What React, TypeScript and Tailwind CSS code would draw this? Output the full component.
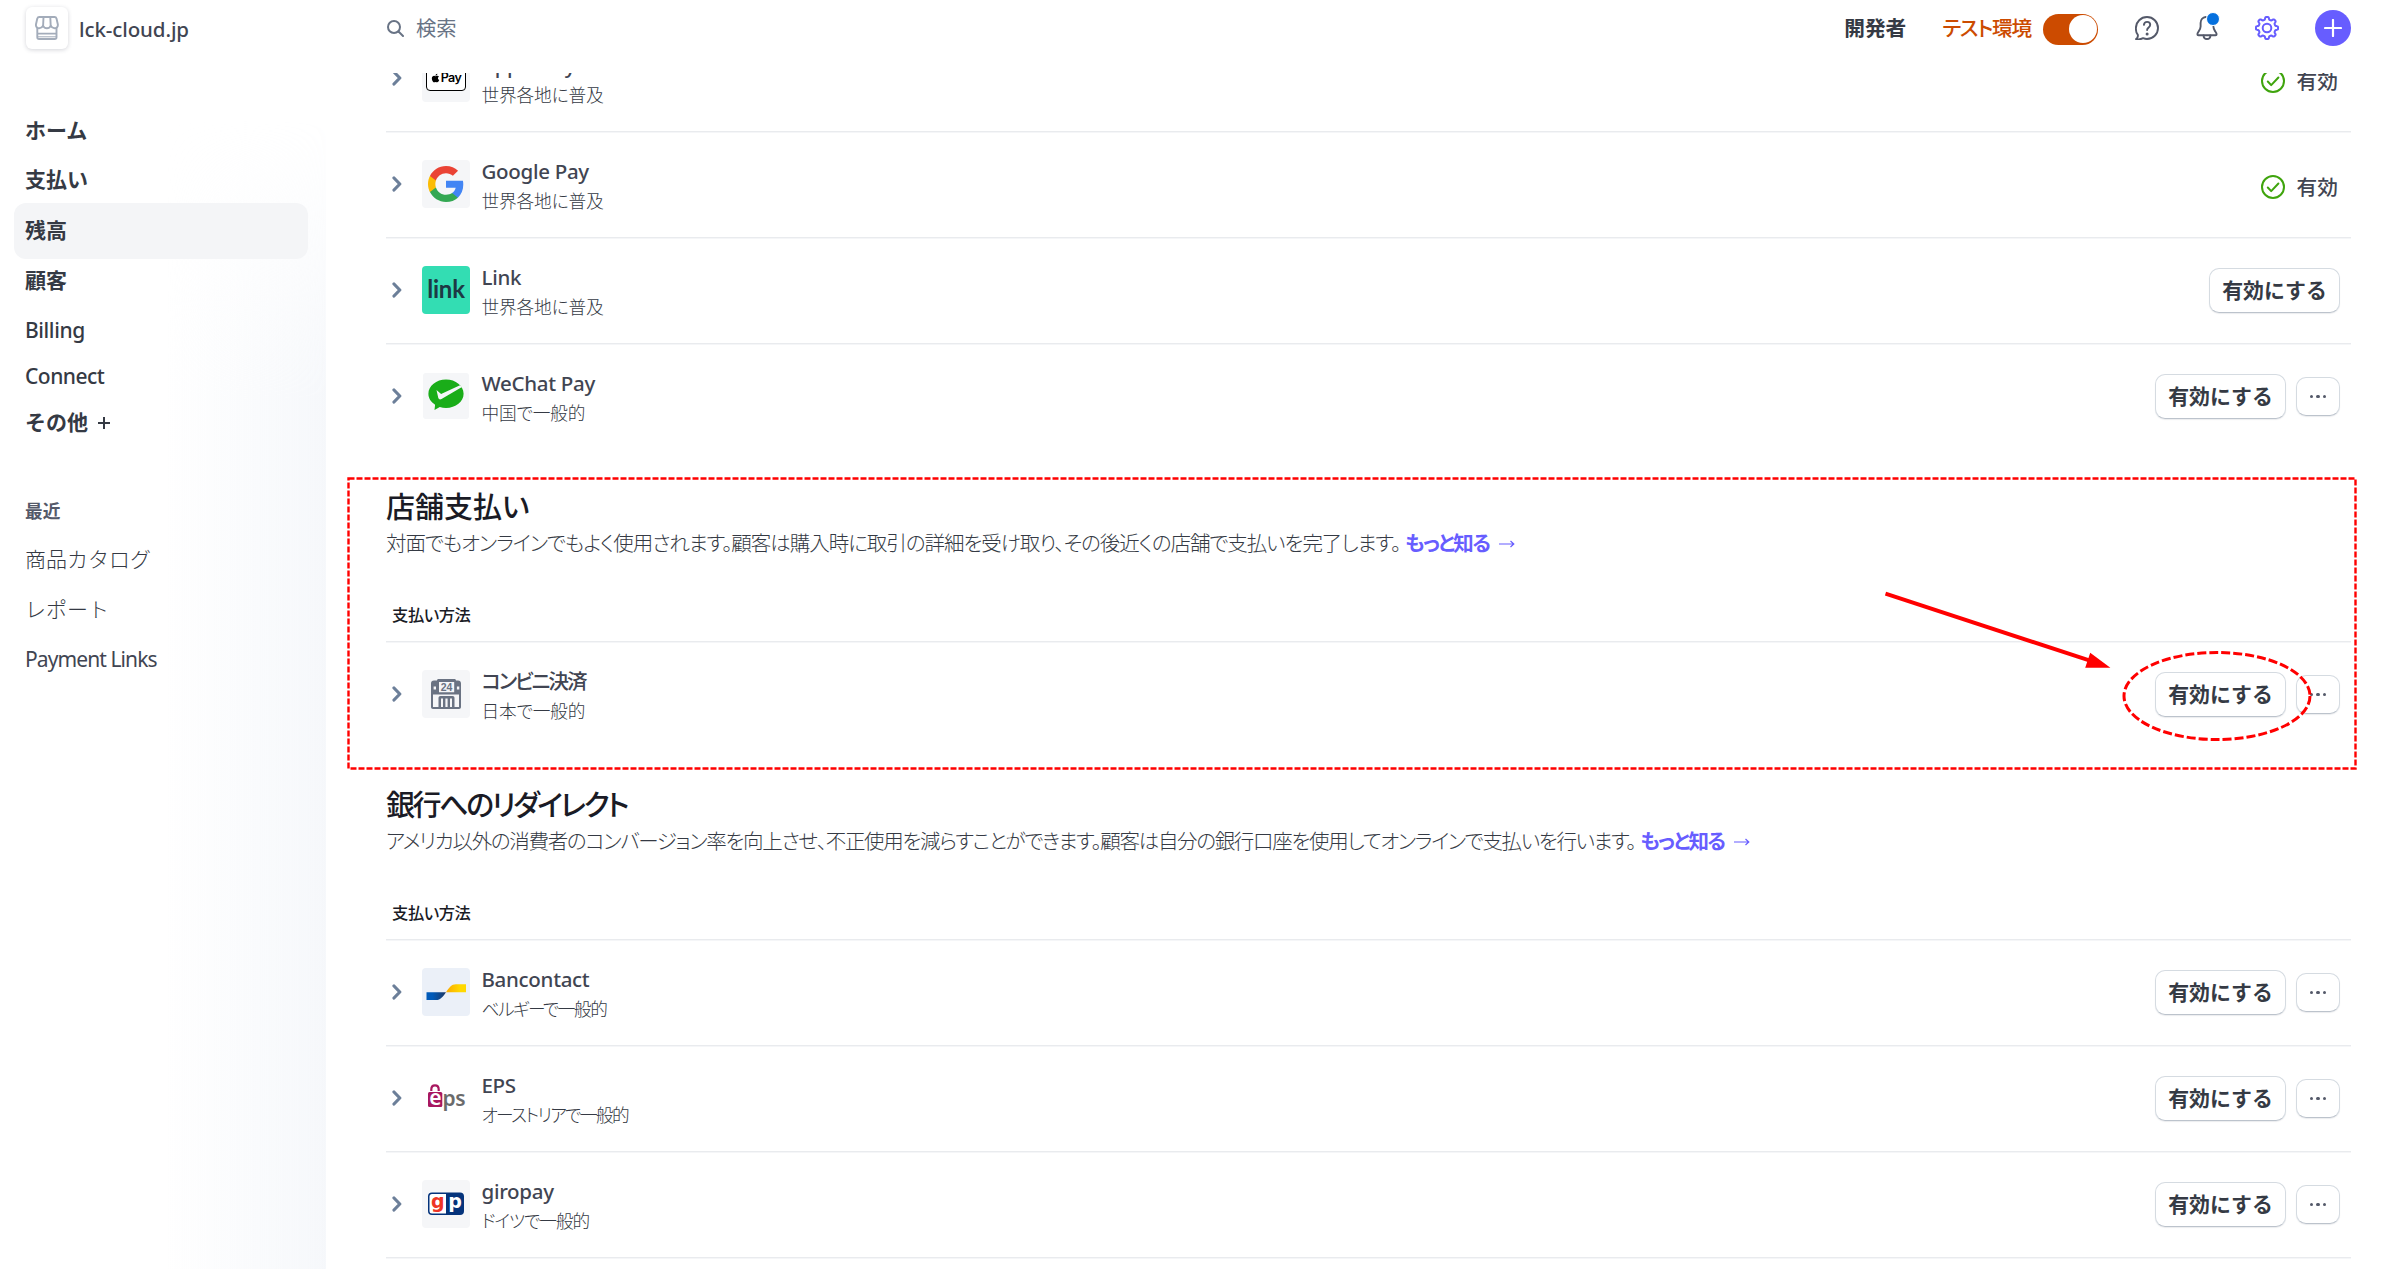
import React from 'react';
import { FaApple } from 'react-icons/fa';

const Chevron = () => (
  <svg className="h-[16px] w-[10px] shrink-0" viewBox="0 0 10 16" fill="none" stroke="#6c7f99" strokeWidth="3.2" strokeLinecap="round" strokeLinejoin="round">
    <path d="M2 2l5.800 6L2 14" />
  </svg>
);

const StoreIcon = () => (
  <svg className="h-6 w-6" viewBox="0 0 24 24" fill="none" stroke="#a3acba" strokeWidth="1.900" strokeLinecap="round" strokeLinejoin="round">
    <path d="M4.200 1h15.400c1 0 1.600.5 1.900 1.500l1.300 5.700c.4 2.200-1 4.100-3.200 4.100-1.700 0-3-.9-3.900-2.500-.8 1.600-2.100 2.500-3.800 2.500s-3-.9-3.800-2.500c-.9 1.600-2.200 2.500-3.900 2.500-2.200 0-3.600-1.900-3.200-4.100l1.300-5.700C2.600 1.500 3.200 1 4.200 1z" />
    <path d="M8.500 1.200l-.4 8.600M15.300 1.200l.4 8.600M2.300 12.200v9c0 1.200.6 1.800 1.800 1.800h15.600c1.200 0 1.800-.6 1.800-1.800v-9M2.500 17.600h18.800" />
    <path d="M3 20.800h17.800" strokeWidth="1" />
  </svg>
);

const SearchIcon = () => (
  <svg className="h-[17px] w-[17px]" viewBox="0 0 17 17" fill="none" stroke="#687385" strokeWidth="2" strokeLinecap="round">
    <circle cx="7" cy="7" r="6" />
    <path d="M11.500 11.500L16 16" />
  </svg>
);

const HelpIcon = () => (
  <svg className="h-6 w-6" viewBox="0 0 24 24" fill="none" stroke="#545969" strokeWidth="1.900" strokeLinecap="round" strokeLinejoin="round">
    <path d="M1 23.100c1.500-.9 2.200-2.300 1.800-4.300C.7 16.800.9 14.200.9 12 .9 5.900 5.900 1 12 1s11 4.900 11 11-4.900 11-11 11c-1.500 0-2.600-.3-3.900-.8-2.100 1.100-4.600 1.500-7.100.9z" />
    <path d="M8.900 8.900c.2-1.800 1.500-3 3.200-3s3.100 1.200 3.100 2.900c0 2.600-3.100 2.600-3.100 5.200" />
    <circle cx="12.100" cy="17.900" r="1.500" fill="#545969" stroke="none" />
  </svg>
);

const BellIcon = () => (
  <svg className="h-6 w-6" viewBox="0 0 24 24" fill="none" stroke="#545969" strokeWidth="1.900" strokeLinecap="round" strokeLinejoin="round">
    <path d="M10.800 1C7.700 1.300 5.600 3.900 5.600 7v3.600c0 2-.9 3.400-1.900 4.800-.8 1.200-1.300 1.900-1.300 2.800 0 .7.400 1 1 1h17.200c.6 0 1-.4 1-1 0-.9-.6-1.600-1.300-2.700-.9-1.400-1.900-2.700-1.900-4.900" />
    <path d="M8.600 19.500c0 2.200 1.300 3.500 3.400 3.500s3.400-1.300 3.400-3.500" />
  </svg>
);

// outline of a gear with eight soft teeth
const gearPath =
  Array.from({ length: 160 }, (_, i) => {
    const a = (i / 160) * Math.PI * 2;
    const wave = Math.tanh(2.2 * Math.cos(8 * a)) / Math.tanh(2.2);
    const r = 9.8 + 1.3 * wave;
    return `${i ? 'L' : 'M'}${(12 + r * Math.sin(a)).toFixed(2)} ${(12 - r * Math.cos(a)).toFixed(2)}`;
  }).join('') + 'Z';

const GearIcon = () => (
  <svg className="h-6 w-6" viewBox="0 0 24 24" fill="none" stroke="#675dff" strokeWidth="2" strokeLinejoin="round">
    <path d={gearPath} />
    <circle cx="12" cy="12" r="4.300" />
  </svg>
);

const CheckIcon = () => (
  <svg className="h-6 w-6" viewBox="0 0 24 24" fill="none" stroke="#3fa40d" strokeWidth="2" strokeLinecap="round" strokeLinejoin="round">
    <circle cx="12" cy="12" r="11" />
    <path d="M6.800 12.500l3.400 3.600 7.200-7.600" />
  </svg>
);

/* Payment method logos, all on a 48px tile */

const ApplePayLogo = () => (
  <div className="flex h-12 w-12 items-center justify-center rounded bg-[#f5f6f8]">
    <div className="flex h-[26px] w-[40px] items-center justify-center rounded-[4px] border-[1.5px] border-black bg-white font-[Inter] text-black">
      <FaApple className="mr-px h-[10px] w-[9px]" />
      <span className="text-[12.5px] leading-none font-semibold tracking-[-0.6px]">Pay</span>
    </div>
  </div>
);

const GoogleLogo = () => (
  <div className="flex h-12 w-12 items-center justify-center rounded bg-[#f5f6f8]">
    <svg className="h-[36px] w-[36px]" viewBox="1 1 22 22">
      <path fill="#4285F4" d="M22.560 12.250c0-.78-.07-1.530-.2-2.250H12v4.260h5.920c-.26 1.370-1.040 2.530-2.210 3.310v2.770h3.570c2.080-1.920 3.280-4.740 3.280-8.090z" />
      <path fill="#34A853" d="M12 23c2.970 0 5.460-.98 7.280-2.660l-3.570-2.770c-.98.66-2.230 1.060-3.710 1.060-2.860 0-5.290-1.930-6.160-4.530H2.180v2.840C3.990 20.530 7.700 23 12 23z" />
      <path fill="#FBBC05" d="M5.840 14.090c-.22-.66-.35-1.360-.35-2.090s.13-1.430.35-2.090V7.070H2.180C1.430 8.550 1 10.220 1 12s.43 3.450 1.180 4.930l2.850-2.220.81-.62z" />
      <path fill="#EA4335" d="M12 5.380c1.620 0 3.060.56 4.210 1.640l3.150-3.150C17.450 2.090 14.970 1 12 1 7.700 1 3.990 3.470 2.180 7.070l3.660 2.840c.87-2.600 3.300-4.530 6.160-4.530z" />
    </svg>
  </div>
);

const LinkLogo = () => (
  <div className="flex h-12 w-12 items-center justify-center rounded bg-[#33ddb3]">
    <span className="-mt-[2px] font-[Lato] text-[24px] leading-none font-bold tracking-[-0.2px] text-[#1d3944]">link</span>
  </div>
);

const WeChatLogo = () => (
  <div className="h-12 w-12 p-px">
    <svg className="h-[46px] w-[46px] rounded-[3px] bg-[#f5f6f8]" viewBox="1 1 46 46">
      <path fill="#1aad19" d="M24 7.600c9.700 0 17.600 6.300 17.600 14.200S33.700 36 24 36c-2.200 0-4.300-.3-6.200-.9L12.500 38l.6-5.300C9 30.100 6.400 26.200 6.400 21.800 6.400 13.900 14.300 7.600 24 7.600z" />
      <path fill="#f5f6f8" d="M14.500 18l4.600 4.100L38 13.200l2 1.800-20.500 12c-1.500.9-2.600.4-3.200-1z" />
    </svg>
  </div>
);

const KonbiniLogo = () => (
  <div className="h-12 w-12 rounded bg-[#f5f6f8]">
    <svg className="h-12 w-12" viewBox="0 0 48 48">
      <path fill="#6a7383" d="M16.500 9h16c.9 0 1.300.5 1.500 1.500h2c1.900 0 3 1.200 3 3V37c0 1.200-.8 2-2 2H11c-1.200 0-2-.8-2-2V13.500c0-1.800 1.100-3 3-3h3c.1-1 .6-1.500 1.500-1.500z" />
      <path fill="#f5f6f8" d="M17 12h15.200v10.300H17zM11.600 16.500h2.400v3h-2.400zM34.900 16.500h2.400v3h-2.400zM11 24.500h26V37H11z" />
      <path fill="#6a7383" d="M18.500 26h12c1.300 0 2 .7 2 2v10h-16V28c0-1.300.7-2 2-2z" />
      <path fill="#f5f6f8" d="M19 28.500h2V37h-2zM23.400 28.500h2.200V37h-2.200zM28 28.500h2V37h-2z" />
      <text x="24.600" y="20.900" textAnchor="middle" fontSize="10.500" fontWeight="700" fill="#6a7383" className="font-['Liberation_Sans']">24</text>
    </svg>
  </div>
);

const BancontactLogo = () => (
  <div className="h-12 w-12 rounded bg-[#ebf0f8]">
    <svg className="h-12 w-12" viewBox="0 0 48 48">
      <defs>
        <linearGradient id="bc-blue">
          <stop offset="0.3" stopColor="#005ab9" />
          <stop offset="1" stopColor="#1e3764" />
        </linearGradient>
        <linearGradient id="bc-yellow">
          <stop offset="0" stopColor="#fba900" />
          <stop offset="0.7" stopColor="#ffd800" />
        </linearGradient>
      </defs>
      <path fill="url(#bc-blue)" d="M4.500 24.200H24c-3.300 4.600-5.300 7.800-10 7.800H4.500z" />
      <path fill="url(#bc-yellow)" d="M24 24.200c3.300-4.700 5.300-8 10-8h10v8z" />
    </svg>
  </div>
);

const EpsLogo = () => (
  <svg className="h-12 w-12" viewBox="0 0 48 48">
    <path d="M9.300 17v-1.500c0-2.600 1.300-4.200 3.700-4.200s3.700 1.600 3.700 4.200V17" fill="none" stroke="#a8175f" strokeWidth="2.200" />
    <rect x="6" y="18" width="14.300" height="15" rx="1.500" fill="#a8175f" />
    <text x="7.300" y="31" fontSize="21" fontWeight="600" fill="#fff" className="font-['Noto_Sans']">e</text>
    <text x="20.500" y="31.500" fontSize="21" fontWeight="600" letterSpacing="-0.3" fill="#6b6b6b" className="font-['Noto_Sans']">ps</text>
  </svg>
);

const GiropayLogo = () => (
  <div className="h-12 w-12 rounded bg-[#f5f6f8]">
    <svg className="h-12 w-12" viewBox="0 0 48 48">
      <rect x="6" y="12.500" width="36" height="22.500" rx="4" fill="#04337b" />
      <path fill="#fff" d="M10 14h14v19.500H10a2.500 2.500 0 0 1-2.500-2.500V16.500A2.500 2.500 0 0 1 10 14z" />
      <text x="15.800" y="27.800" textAnchor="middle" fontSize="19" fontWeight="700" fill="#ee3525" className="font-['DejaVu_Sans']">g</text>
      <text x="33" y="27.800" textAnchor="middle" fontSize="19" fontWeight="700" fill="#fff" className="font-['DejaVu_Sans']">p</text>
    </svg>
  </div>
);

const EnableButton = () => (
  <button className="h-[45px] w-[131px] rounded-[10px] border border-[#d5dbe1] border-b-[#bcc3cc] bg-white pt-px text-[20.9px] font-bold text-[#353a44] shadow-[0_1px_1px_rgba(60,66,87,0.1)]">
    有効にする
  </button>
);

const MoreButton = () => (
  <button className="flex h-[39px] w-[44px] items-center justify-center gap-[3px] rounded-[10px] border border-[#d5dbe1] border-b-[#bcc3cc] bg-white shadow-[0_1px_1px_rgba(60,66,87,0.1)]">
    <span className="h-[3.5px] w-[3.5px] rounded-full bg-[#545969]" />
    <span className="h-[3.5px] w-[3.5px] rounded-full bg-[#545969]" />
    <span className="h-[3.5px] w-[3.5px] rounded-full bg-[#545969]" />
  </button>
);

interface MethodRowProps {
  logo: React.ReactNode;
  name: string;
  region: string;
  action: 'active' | 'enable' | 'enable-more';
  nameClass?: string;
  regionClass?: string;
  last?: boolean;
}

const MethodRow = ({
  logo,
  name,
  region,
  action,
  nameClass = 'tracking-[-0.3px]',
  regionClass = 'tracking-[-0.15px]',
  last,
}: MethodRowProps) => (
  <div
    className={`flex h-[106px] shrink-0 items-center border-b pr-[11px] pb-px pl-[5.5px] ${
      last ? 'border-transparent' : 'border-[#e9ebee] shadow-[0_1px_0_#f5f6f8]'
    }`}
  >
    <Chevron />
    <div className="ml-[20.5px] shrink-0">{logo}</div>
    <div className="mt-[3px] ml-[11.5px] flex-1 whitespace-nowrap [font-feature-settings:'palt']">
      <div className={`text-[20.5px] leading-[28px] font-medium text-[#414552] ${nameClass}`}>{name}</div>
      <div className={`mt-[2px] text-[17.7px] leading-[28px] font-light text-[#353a44] ${regionClass}`}>{region}</div>
    </div>
    {action === 'active' ? (
      <div className="mt-[5px] mr-[2px] flex items-center gap-3">
        <CheckIcon />
        <span className="text-[20.7px] leading-[28px] font-medium text-[#414552]">有効</span>
      </div>
    ) : (
      <div className="mt-px flex items-center gap-[10px]">
        <EnableButton />
        {action === 'enable-more' && <MoreButton />}
      </div>
    )}
  </div>
);

interface SectionProps {
  title: string;
  description: string;
  titleClass: string;
  descriptionClass: string;
  children: React.ReactNode;
}

const Section = ({ title, description, titleClass, descriptionClass, children }: SectionProps) => (
  <section className="shrink-0 pt-[39px]">
    <h2 className={`text-[29px] leading-[36px] font-medium whitespace-nowrap text-[#1a1b25] [font-feature-settings:'palt'] ${titleClass}`}>{title}</h2>
    <p className="mt-[3px] flex gap-[5px] text-[20.5px] leading-[30px] whitespace-nowrap text-[#353a44] [font-feature-settings:'palt']">
      <span className={`font-light ${descriptionClass}`}>{description}</span>
      <a className="flex gap-[10px] font-bold text-[#675dff]">
        <span className="tracking-[-1.8px]">もっと知る</span>
        <svg className="mt-[10px] h-3 w-4" viewBox="0 0 16 12" fill="none" stroke="currentColor" strokeWidth="1.200">
          <path d="M0 6h14.500M11.500 3L14.800 6l-3.300 3" />
        </svg>
      </a>
    </p>
    <div className="flex h-[84px] items-end border-b border-[#e9ebee] pb-[14px] pl-[6px] shadow-[0_1px_0_#f5f6f8] [font-feature-settings:'palt']">
      <span className="text-[16.3px] leading-[24px] font-medium tracking-[-0.4px] text-[#1a1b25]">支払い方法</span>
    </div>
    {children}
  </section>
);

const Sidebar = () => (
  <aside className="relative w-[326px] shrink-0 text-[21px]">
    {/* soft tint along the right edge */}
    <div className="absolute inset-0 bg-linear-to-r from-transparent from-50% to-[#f6f8fb] mask-[linear-gradient(to_bottom,transparent_120px,black_400px)]" />
    <div className="relative">
      <div className="flex h-[56px] items-center gap-[11px] pl-[26px]">
        <div className="flex h-[42px] w-[42px] items-center justify-center rounded-md bg-white shadow-[0_1px_4px_rgba(60,66,87,0.22)]">
          <StoreIcon />
        </div>
        <span className="mt-[2px] text-[20.5px] font-medium tracking-[-0.1px] text-[#414552]">lck-cloud.jp</span>
      </div>
      <nav className="mt-[50px] flex flex-col pr-[18px] pl-[14px] font-bold text-[#353a44]">
        <a className="flex h-[50px] items-center pl-[11px]">ホーム</a>
        <a className="flex h-[47px] items-center pl-[11px]">支払い</a>
        <a className="flex h-[56px] items-center rounded-xl bg-[#f4f5f7] pb-px pl-[11px]">残高</a>
        <a className="flex h-[44px] items-center pl-[11px]">顧客</a>
        <a className="flex h-[56px] items-center pl-[11px] font-medium tracking-[-0.4px]">Billing</a>
        <a className="flex h-[36px] items-center pl-[11px] font-medium tracking-[-0.5px]">Connect</a>
        <a className="flex h-[56px] items-center gap-[10px] pl-[11px]">
          その他
          <svg className="h-3 w-3" viewBox="0 0 12 12" stroke="currentColor" strokeWidth="2">
            <path d="M6 0v12M0 6h12" />
          </svg>
        </a>
      </nav>
      <div className="mt-[46px] flex flex-col pl-[25px] font-light text-[#353a44]">
        <span className="flex h-[28px] items-center text-[17.7px] font-bold text-[#545969]">最近</span>
        <a className="mt-[10px] flex h-[50px] items-center">商品カタログ</a>
        <a className="flex h-[50px] items-center">レポート</a>
        <a className="flex h-[50px] items-center font-normal tracking-[-0.9px] text-[#414552]">Payment Links</a>
      </div>
    </div>
  </aside>
);

const TopBar = () => (
  <header className="relative z-10 flex h-[73px] shrink-0 items-start bg-white pr-[36px] pl-[61px]">
    <div className="flex h-[56px] flex-1 items-center gap-3 text-[20.3px] text-[#687385]">
      <SearchIcon />
      <span className="font-normal">検索</span>
    </div>
    <div className="flex h-[56px] items-center">
      <span className="mt-px text-[20.7px] font-bold text-[#353a44]">開発者</span>
      <span className="mt-px ml-[36px] text-[20.7px] font-medium tracking-[-1.2px] text-[#cc4b00] [font-feature-settings:'palt']">テスト環境</span>
      <div className="mt-[2px] ml-[12px] flex h-[31px] w-[55px] items-center justify-end rounded-full bg-[#cc4b00] p-px">
        <div className="h-[28px] w-[28px] rounded-full bg-white" />
      </div>
      <div className="ml-[37px]">
        <HelpIcon />
      </div>
      <div className="relative ml-[36px]">
        <BellIcon />
        <span className="absolute -top-[4px] -right-px h-[14px] w-[14px] rounded-full border-[1.5px] border-white bg-[#0570de]" />
      </div>
      <div className="ml-[36px]">
        <GearIcon />
      </div>
      <div className="-mt-px ml-[36px] flex h-9 w-9 items-center justify-center rounded-full bg-[#675dff]">
        <svg className="h-[18px] w-[18px]" viewBox="0 0 18 18" stroke="#fff" strokeWidth="2.200" strokeLinecap="round">
          <path d="M9 1v16M1 9h16" />
        </svg>
      </div>
    </div>
  </header>
);

/* Markup drawn over the page: box round the section, ring and arrow at the button */
const Annotations = () => (
  <svg className="pointer-events-none absolute inset-0 z-20 h-[1269px] w-[2387px]" viewBox="0 0 2387 1269" fill="none" stroke="#ff0000">
    <rect x="348.500" y="478.500" width="2007" height="290" strokeWidth="2.400" strokeDasharray="6 2" />
    <ellipse cx="2217" cy="696" rx="93" ry="43.500" strokeWidth="3" strokeDasharray="9 3" />
    <path d="M1885.500 593.700L2090 660.700" strokeWidth="4" />
    <path d="M2110.400 667.700L2090.200 652.700L2085.200 667.700z" fill="#ff0000" stroke="none" />
  </svg>
);

const App = () => {
  return (
    <div className="relative flex h-[1269px] w-[2387px] overflow-hidden bg-white font-['Noto_Sans','Noto_Sans_CJK_JP',sans-serif]">
      <Sidebar />
      <main className="flex flex-1 flex-col overflow-hidden">
        <TopBar />
        <div className="-mt-[47px] flex flex-1 flex-col overflow-hidden pr-[36px] pl-[60px]">
          <MethodRow logo={<ApplePayLogo />} name="Apple Pay" region="世界各地に普及" action="active" />
          <MethodRow logo={<GoogleLogo />} name="Google Pay" region="世界各地に普及" action="active" />
          <MethodRow logo={<LinkLogo />} name="Link" region="世界各地に普及" action="enable" />
          <MethodRow logo={<WeChatLogo />} name="WeChat Pay" region="中国で一般的" action="enable-more" last />

          <Section
            title="店舗支払い"
            description="対面でもオンラインでもよく使用されます。顧客は購入時に取引の詳細を受け取り、その後近くの店舗で支払いを完了します。"
            titleClass=""
            descriptionClass="tracking-[-1.04px]"
          >
            <MethodRow logo={<KonbiniLogo />} name="コンビニ決済" nameClass="tracking-[-2.1px]" region="日本で一般的" action="enable-more" last />
          </Section>

          <Section
            title="銀行へのリダイレクト"
            description="アメリカ以外の消費者のコンバージョン率を向上させ、不正使用を減らすことができます。顧客は自分の銀行口座を使用してオンラインで支払いを行います。"
            titleClass="tracking-[-2.4px]"
            descriptionClass="tracking-[-1.32px]"
          >
            <MethodRow logo={<BancontactLogo />} name="Bancontact" region="ベルギーで一般的" regionClass="tracking-[-1.5px]" action="enable-more" />
            <MethodRow logo={<EpsLogo />} name="EPS" region="オーストリアで一般的" regionClass="tracking-[-1.6px]" action="enable-more" />
            <MethodRow logo={<GiropayLogo />} name="giropay" region="ドイツで一般的" regionClass="tracking-[-1.1px]" action="enable-more" />
          </Section>
        </div>
      </main>
      <Annotations />
    </div>
  );
};

export default App;
